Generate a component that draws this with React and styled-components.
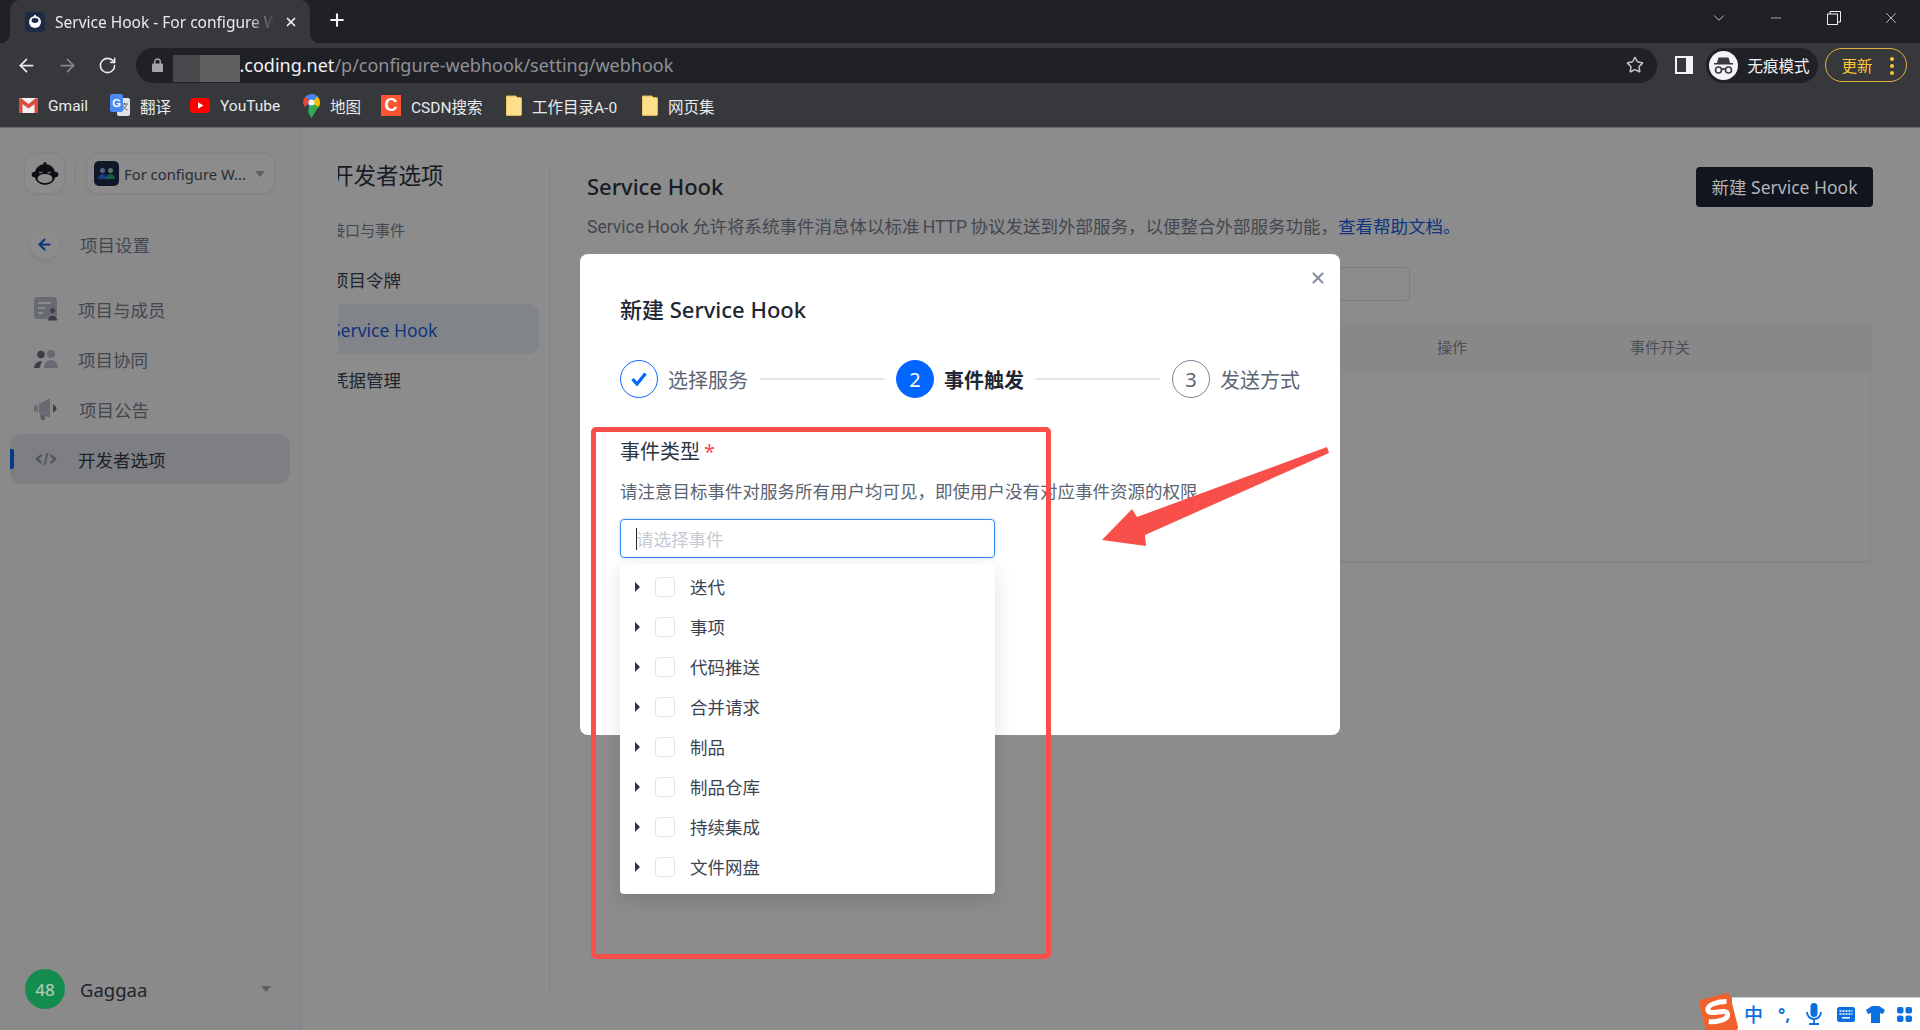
import styled, { createGlobalStyle } from "styled-components"
import { ArrowLeft, ArrowRight, RotateCw, Star, Plus, X, Minus, ChevronDown } from "lucide-react"

const GlobalStyle = createGlobalStyle`
    html, body {
        margin: 0;
        height: 100%;
        overflow: hidden;
        background: #fff;
        font-family: "Noto Sans", "Noto Sans CJK SC", sans-serif;
    }
    * { box-sizing: border-box; }
`

const CJK = `"Noto Sans", "Noto Sans CJK SC", sans-serif`

/* ---------- browser chrome ---------- */
const Browser = styled.div`
    width: 1920px;
    height: 1030px;
    display: flex;
    flex-direction: column;
    overflow: hidden;
    position: relative;
`
const TabStrip = styled.div`
    height: 43px;
    background: #202127;
    display: flex;
    align-items: flex-end;
    padding-left: 10px;
    color: #fff;
`
const Tab = styled.div`
    width: 300px;
    height: 43px;
    background: #37383c;
    border-radius: 10px 10px 0 0;
    display: flex;
    align-items: center;
    padding-left: 15px;
    gap: 10px;
    position: relative;
    &::before, &::after {
        content: "";
        position: absolute;
        bottom: 0;
        width: 10px;
        height: 10px;
    }
    &::before { left: -10px; background: radial-gradient(circle at 0 0, transparent 10px, #37383c 10.5px); }
    &::after { right: -10px; background: radial-gradient(circle at 100% 0, transparent 10px, #37383c 10.5px); }
`
const TabTitle = styled.span`
    width: 219px;
    overflow: hidden;
    white-space: nowrap;
    font-size: 15.5px;
    color: #e8eaed;
    mask-image: linear-gradient(to right, #000 88%, transparent 100%);
`
const TabClose = styled.span`
    display: flex;
    color: #f1f1f1;
`
const NewTab = styled.span`
    display: flex;
    margin: 0 0 3px 17px;
    height: 40px;
    align-items: center;
    color: #f4f4f4;
`
const WindowControls = styled.div`
    margin-left: auto;
    display: flex;
    height: 36px;
    align-self: flex-start;
`
const WindowButton = styled.span`
    width: 57.5px;
    display: flex;
    align-items: center;
    justify-content: center;
    color: #eceff2;
`
const Toolbar = styled.div`
    height: 43px;
    background: #37383c;
    display: flex;
    align-items: center;
    padding: 5px 11px 4px 6.5px;
`
const NavButton = styled.span`
    width: 40.5px;
    display: flex;
    justify-content: center;
    color: ${p => (p.$dim ? "#85868a" : "#e8eaed")};
`
const AddressBar = styled.div`
    width: 1521px;
    margin-left: 7.5px;
    height: 35px;
    background: #202127;
    border-radius: 18px;
    display: flex;
    align-items: center;
    padding-left: 16px;
    position: relative;
    font-size: 18px;
    white-space: nowrap;
`
const Masked = styled.span`
    width: 67px;
    height: 27px;
    margin: 7px 0 0 10px;
    background: linear-gradient(to right, #48494d 0 40%, #605e5f 40% 100%);
`
const Host = styled.span`color: #f1f3f4;`
const UrlPath = styled.span`color: #8f9194;`
const StarIcon = styled.span`
    position: absolute;
    right: 13px;
    display: flex;
    color: #c4c6c9;
`
const SidePanelIcon = styled.svg`
    margin-left: 18px;
    flex: none;
`
const IncognitoPill = styled.div`
    margin-left: 13px;
    width: 112px;
    height: 35px;
    background: #202127;
    border-radius: 18px;
    display: flex;
    align-items: center;
    padding-left: 3px;
    gap: 10px;
    color: #f1f3f4;
    font-size: 15.5px;
`
const UpdatePill = styled.div`
    margin-left: 7px;
    width: 82px;
    height: 34px;
    border: 1px solid #e2b03e;
    border-radius: 18px;
    display: flex;
    align-items: center;
    padding-left: 16px;
    color: #fcc934;
    font-size: 15.5px;
    position: relative;
`
const Dots = styled.span`
    position: absolute;
    right: 12px;
    top: 8px;
    display: grid;
    gap: 3px;
    i {
        display: block;
        width: 4px;
        height: 4px;
        border-radius: 50%;
        background: #fcc934;
    }
`
const BookmarkBar = styled.div`
    height: 42px;
    padding: 0 0 2px 19px;
    background: #37383c;
    border-bottom: 1px solid #6b6c6e;
    display: flex;
    align-items: center;
`
const Bookmark = styled.div`
    width: ${p => p.$w}px;
    display: flex;
    align-items: center;
    gap: 10px;
    color: #e8eaed;
    font: 15.5px Roboto, "Noto Sans CJK SC", sans-serif;
    white-space: nowrap;
`
const CsdnIcon = styled.span`
    width: 20px;
    height: 21px;
    background: #fc5531;
    color: #fff;
    font: 700 18px "Liberation Sans", sans-serif;
    display: flex;
    align-items: center;
    justify-content: center;
`

/* ---------- page ---------- */
const Page = styled.div`
    flex: 1;
    display: flex;
    position: relative;
    background: #fff;
    min-height: 0;
`
const Sidebar = styled.aside`
    width: 301px;
    flex: none;
    background: #fbfbfc;
    border-right: 1px solid #f1f2f4;
    padding: 25px 10px 21px;
    display: flex;
    flex-direction: column;
`
const SideHeader = styled.div`
    display: flex;
    align-items: center;
    height: 41px;
    padding-left: 14px;
`
const LogoBox = styled.div`
    width: 41px;
    height: 41px;
    border-radius: 12px;
    border: 1px solid #eceef1;
    background: #fff;
    box-shadow: 0 1px 3px rgba(0, 0, 0, .05);
    display: flex;
    align-items: center;
    justify-content: center;
`
const HeaderRule = styled.span`
    width: 1px;
    height: 25px;
    margin: 0 10px;
    background: #e3e5e9;
`
const ProjectSwitch = styled.div`
    width: 189px;
    height: 41px;
    border-radius: 12px;
    border: 1px solid #eceef1;
    background: #fff;
    box-shadow: 0 1px 3px rgba(0, 0, 0, .05);
    display: flex;
    align-items: center;
    padding-left: 7px;
    gap: 5px;
    font-size: 14.8px;
    color: #4b5365;
    white-space: nowrap;
`
const Caret = styled.i`
    width: 0;
    height: 0;
    border-left: 5px solid transparent;
    border-right: 5px solid transparent;
    border-top: 6px solid #a9aeb8;
    margin-left: ${p => p.$gap || 0}px;
`
const BackRow = styled.div`
    display: flex;
    align-items: center;
    height: 30px;
    margin-top: 35px;
    padding-left: 20px;
    gap: 21px;
    font-size: 17.5px;
    color: #7b8292;
`
const BackCircle = styled.span`
    width: 29px;
    height: 29px;
    border-radius: 50%;
    background: #fff;
    box-shadow: 0 2px 5px rgba(0, 0, 0, .08);
    display: flex;
    align-items: center;
    justify-content: center;
    color: #1e5fe0;
`
const NavList = styled.nav`
    margin-top: 25px;
    display: flex;
    flex-direction: column;
`
const NavRow = styled.div`
    height: 50px;
    display: flex;
    align-items: center;
    padding-left: 24px;
    gap: 20px;
    font-size: 17.5px;
    border-radius: 12px;
    position: relative;
    color: ${p => (p.$active ? "#363d4d" : "#7b8292")};
    background: ${p => (p.$active ? "#e4e8ee" : "transparent")};
    &::before {
        content: "";
        display: ${p => (p.$active ? "block" : "none")};
        position: absolute;
        left: 0;
        top: 15px;
        width: 4px;
        height: 20px;
        background: #0f66ff;
        border-radius: 0 2px 2px 0;
    }
`
const UserRow = styled.div`
    margin-top: auto;
    display: flex;
    align-items: center;
    padding-left: 15px;
    gap: 15px;
    font-size: 18.5px;
    color: #3c4454;
`
/* sits above the dimming layer: the picture shows it brighter than the layer would leave it */
const Avatar = styled.span`
    width: 40px;
    height: 40px;
    border-radius: 50%;
    background: #148c50;
    color: #aec9b8;
    font-size: 17px;
    font-weight: 500;
    display: flex;
    align-items: center;
    justify-content: center;
    position: relative;
    z-index: 1;
`
const SubNav = styled.div`
    width: 248px;
    flex: none;
    padding: 30px 0 0 37px;
`
const SubClip = styled.div`
    width: 201px;
    overflow: hidden;
`
const SubTitle = styled.div`
    font-size: 22.5px;
    line-height: 36px;
    margin-left: -7px;
    color: #2d3444;
    white-space: nowrap;
`
const SubLabel = styled.div`
    font-size: 15px;
    line-height: 30px;
    margin: 21px 0 9px -8px;
    color: #7b8292;
    white-space: nowrap;
`
const SubRow = styled.div`
    height: 50px;
    line-height: 52px;
    font-size: 17.5px;
    border-radius: 0 10px 10px 0;
    color: ${p => (p.$active ? "#1a5fe8" : "#3c4454")};
    background: ${p => (p.$active ? "#ecf1f8" : "transparent")};
    text-indent: -7px;
    white-space: nowrap;
`
const SubRule = styled.span`
    width: 1px;
    flex: none;
    margin: 39px 0 35px;
    background: #eceef1;
`
const Main = styled.main`
    flex: 1;
    padding: 39px 47px 0 37px;
    min-width: 0;
`
const MainHead = styled.div`
    display: flex;
    align-items: center;
    justify-content: space-between;
`
const MainTitle = styled.h1`
    margin: 0 0 2px;
    font-size: 22px;
    font-weight: 500;
    color: #2d3444;
`
/* sits above the dimming layer too, for the same reason as Avatar */
const PrimaryButton = styled.div`
    width: 177px;
    height: 40px;
    padding-bottom: 2px;
    border-radius: 4px;
    background: #11151f;
    color: #b4b4b4;
    font-size: 17.5px;
    display: flex;
    align-items: center;
    justify-content: center;
    position: relative;
    z-index: 1;
`
const Description = styled.p`
    margin: 7px 0 0;
    font-family: Roboto, "Noto Sans CJK SC", sans-serif;
    font-size: 17.5px;
    line-height: 26px;
    word-spacing: -1px;
    color: #7b8292;
    a { color: #1a5fe8; }
`
const SearchBox = styled.div`
    width: 823px;
    height: 34px;
    margin-top: 27px;
    border: 1px solid #dfe2e7;
    border-radius: 5px;
`
const Table = styled.div`
    margin: 22px 3px 0 0;
    height: 238px;
    border-radius: 5px;
    background: #fff;
    box-shadow: 0 1px 3px rgba(20, 40, 80, .12);
`
const TableHead = styled.div`
    height: 50px;
    padding-bottom: 2px;
    display: grid;
    grid-template-columns: 834px 193px 1fr;
    align-items: center;
    background: #f7f8f9;
    font-size: 15px;
    color: #8a909c;
`
const HeadCell = styled.div`
    height: 26px;
    line-height: 26px;
    padding-left: 15px;
    border-left: ${p => (p.$first ? "none" : "1px solid #eceef1")};
`

/* ---------- modal ---------- */
const Overlay = styled.div`
    position: absolute;
    inset: 0;
    background: rgba(0, 0, 0, .45);
    display: flex;
    justify-content: center;
    align-items: flex-start;
    padding-top: 126px;
    font-family: ${CJK};
`
const Modal = styled.section`
    width: 760px;
    height: 481px;
    background: #fff;
    border-radius: 8px;
    padding: 37px 40px 0;
    position: relative;
    z-index: 2;
`
const CloseButton = styled.span`
    position: absolute;
    right: 13px;
    top: 15px;
    display: flex;
    color: #8a93a3;
`
const ModalTitle = styled.h2`
    margin: 0;
    font-size: 22px;
    line-height: 36px;
    font-weight: 500;
    color: #1f2633;
`
const Stepper = styled.div`
    margin-top: 33px;
    display: flex;
    align-items: center;
`
const Step = styled.div`
    display: flex;
    align-items: center;
    gap: 10px;
    font-size: 20px;
    font-weight: ${p => (p.$current ? 700 : 400)};
    color: ${p => (p.$current ? "#1f2633" : "#5b6472")};
`
const StepCircle = styled.span`
    width: 38px;
    height: 38px;
    border-radius: 50%;
    display: flex;
    align-items: center;
    justify-content: center;
    font-size: 20px;
    font-weight: 400;
    border: 1px solid ${p => (p.$state === "todo" ? "#7c8595" : "#0f66ff")};
    background: ${p => (p.$state === "current" ? "#0066ff" : "#fff")};
    color: ${p => (p.$state === "current" ? "#fff" : p.$state === "done" ? "#0066ff" : "#5b6472")};
`
const StepLine = styled.span`
    flex: 1;
    height: 2px;
    margin: 0 12px;
    background: #e2e6ec;
`
const FieldLabel = styled.div`
    margin-top: 39px;
    font-size: 20px;
    line-height: 30px;
    color: #2d3444;
    b { color: #f5484a; font-weight: 400; margin-left: 4px; }
`
const Hint = styled.div`
    margin-top: 11px;
    font-size: 17.5px;
    line-height: 26px;
    color: #5b6472;
    white-space: nowrap;
`
const SelectWrap = styled.div`
    margin-top: 15px;
    width: 375px;
    position: relative;
`
const SelectInput = styled.div`
    height: 39px;
    border: 1px solid #3b8cf5;
    border-radius: 4px;
    box-shadow: 0 0 3px rgba(0, 102, 255, .35);
    display: flex;
    align-items: center;
    padding-left: 15px;
    font-size: 17.5px;
    color: #c5cad3;
    &::before {
        content: "";
        width: 1px;
        height: 22px;
        margin-right: -1px;
        background: #222;
    }
`
const Dropdown = styled.div`
    position: absolute;
    left: 0;
    top: 45px;
    width: 375px;
    height: 330px;
    padding: 3px 0;
    background: #fff;
    border-radius: 4px;
    box-shadow: 0 6px 20px rgba(0, 0, 0, .12);
`
const OptionRow = styled.div`
    height: 40px;
    display: flex;
    align-items: center;
    padding-left: 15px;
    font-size: 17.5px;
    color: #3c4454;
`
const OptionCaret = styled.i`
    width: 0;
    height: 0;
    border-top: 5px solid transparent;
    border-bottom: 5px solid transparent;
    border-left: 5px solid #2d3444;
`
const Check = styled.span`
    width: 20px;
    height: 20px;
    margin: 0 15px 0 15px;
    border: 1px solid #dfe3e9;
    border-radius: 4px;
`
const OptionName = styled.span`
    margin-bottom: 2px;
`
const RedBox = styled.div`
    position: absolute;
    left: 591px;
    top: 299px;
    width: 460px;
    height: 532px;
    border: 5px solid #f84f4a;
    border-radius: 5px;
    z-index: 3;
`
const RedArrow = styled.svg`
    position: absolute;
    left: 1095px;
    top: 312px;
    z-index: 3;
`

/* ---------- input method bar ---------- */
const ImeBar = styled.div`
    position: absolute;
    right: 0;
    bottom: 0;
    width: 188px;
    height: 33px;
    background: #fff;
    border-top: 1px solid #c6d2df;
    display: flex;
    align-items: center;
    padding-left: 12px;
    color: #0a6fe0;
    z-index: 3;
`
const ImeZh = styled.span`
    font-size: 19px;
    font-weight: 500;
    width: 34px;
`
const ImePunct = styled.span`
    font-size: 17px;
    font-weight: 700;
    width: 28px;
`
const ImeIcon = styled.svg`
    margin-right: ${p => p.$gap}px;
    flex: none;
`
const ImeLogo = styled.svg`
    position: absolute;
    right: 181px;
    bottom: 0;
    z-index: 4;
`

/* ---------- drawings ---------- */
const Monkey = ({ size = 28, dark = "#161a24", face = "#fff" }) => (
    <svg width={size} height={size} viewBox="0 0 28 28">
        <circle cx="14" cy="3.500" r="1.600" fill={dark} />
        <circle cx="3.500" cy="14.500" r="2.800" fill={dark} />
        <circle cx="24.500" cy="14.500" r="2.800" fill={dark} />
        <circle cx="14" cy="14.500" r="10.500" fill={dark} />
        <ellipse cx="14" cy="18.500" rx="7.500" ry="4.500" fill={face} />
        <path d="M8 12.500h3.500M16.500 12.500H20" stroke={face} strokeWidth="1.400" opacity=".7" />
    </svg>
)
const Favicon = () => (
    <svg width="20" height="20" viewBox="0 0 20 20">
        <rect width="20" height="20" rx="4" fill="#1c2a44" />
        <circle cx="10" cy="10" r="6" fill="#fff" />
        <ellipse cx="10" cy="8.500" rx="3.400" ry="2.400" fill="#1c2a44" />
        <circle cx="10" cy="3.800" r="1" fill="#fff" />
    </svg>
)
const GmailIcon = () => (
    <svg width="19" height="15" viewBox="0 0 19 15">
        <rect width="19" height="15" rx="1.500" fill="#f1f1f1" />
        <path d="M0 1.500V15h3.500V6L9.500 10.500 15.500 6V15H19V1.500L17 0 9.500 6 2 0z" fill="#dd4b3e" />
    </svg>
)
const TranslateIcon = () => (
    <svg width="20" height="24" viewBox="0 0 20 24">
        <rect x="7" y="4" width="13" height="18" rx="2" fill="#dfe3e8" />
        <path d="M11 10h7M14.500 9v1.500M16.500 10.500c-.6 2.500-2.500 4.500-4.500 5.500M13 11.500c.8 2 2.500 3.800 4.500 4.500" stroke="#5f6368" fill="none" />
        <rect width="13" height="18" rx="2" fill="#4a8af4" />
        <text x="6.500" y="13" textAnchor="middle" fontSize="11" fontWeight="700" fill="#fff" fontFamily="Liberation Sans">G</text>
    </svg>
)
const YoutubeIcon = () => (
    <svg width="20" height="15" viewBox="0 0 20 15">
        <rect width="20" height="15" rx="4" fill="#f00" />
        <path d="M8 4.200v6.600l5.500-3.300z" fill="#fff" />
    </svg>
)
const MapsIcon = () => (
    <svg width="17" height="24" viewBox="0 0 17 24">
        <path d="M8.500 0a8.500 8.500 0 0 1 8.500 8.500c0 3-1.500 5-3.500 7.500L8.500 24 5 18z" fill="#34a853" />
        <path d="M2.500 2.500A8.500 8.500 0 0 1 8.500 0a8.500 8.500 0 0 1 6 2.500l-9 10z" fill="#4285f4" />
        <path d="M14.500 2.500A8.500 8.500 0 0 1 17 8.500c0 1.500-.5 3-1.300 4.300L8.500 9z" fill="#fbbc04" />
        <path d="M0 8.500a8.500 8.500 0 0 1 2.500-6L7 7l-5 6a8.500 8.500 0 0 1-2-4.500z" fill="#ea4335" />
        <circle cx="8.500" cy="8.500" r="3" fill="#f5f5f5" />
    </svg>
)
const FolderIcon = () => (
    <svg width="16" height="21" viewBox="0 0 16 21">
        <path d="M1 1h9l1 1.500h3.500a1 1 0 0 1 1 1V19.500a1 1 0 0 1-1 1H1a1 1 0 0 1-1-1V2a1 1 0 0 1 1-1z" fill="#fcdf8b" stroke="#e2b54c" />
    </svg>
)
const IncognitoIcon = () => (
    <svg width="29" height="29" viewBox="0 0 29 29">
        <circle cx="14.500" cy="14.500" r="14.500" fill="#f1f3f4" />
        <path d="M9.500 6.500h10l1.600 5.500h2.900v1.400H5v-1.400h2.900z" fill="#3a3b3f" />
        <circle cx="9.500" cy="19" r="3" fill="none" stroke="#3a3b3f" strokeWidth="1.600" />
        <circle cx="19.500" cy="19" r="3" fill="none" stroke="#3a3b3f" strokeWidth="1.600" />
        <path d="M12.500 18.500c1.300-.8 2.700-.8 4 0" fill="none" stroke="#3a3b3f" strokeWidth="1.500" />
    </svg>
)
const RestoreIcon = () => (
    <svg width="14" height="14" viewBox="0 0 14 14" fill="none" stroke="currentColor">
        <rect x=".5" y="3" width="10" height="10.500" />
        <path d="M3 3V.5h10.500V11H10.500" />
    </svg>
)
const LockIcon = () => (
    <svg width="11" height="14" viewBox="0 0 11 14">
        <path d="M2.700 6V3.800a2.800 2.800 0 0 1 5.600 0V6" fill="none" stroke="#a4a5a8" strokeWidth="1.400" />
        <rect y="5.500" width="11" height="8.500" rx="1" fill="#a4a5a8" />
    </svg>
)
const ProjectIcon = () => (
    <svg width="25" height="25" viewBox="0 0 25 25">
        <rect width="25" height="25" rx="5" fill="#1d2a4c" />
        <circle cx="8.500" cy="9.500" r="2.500" fill="#9db4e8" />
        <circle cx="16.500" cy="9.500" r="2.500" fill="#9fd8c0" />
        <path d="M4 18c0-3 2-5 4.500-5S13 15 13 18z" fill="#2e6df0" />
        <path d="M12 18c0-3 2-5 4.500-5s4.500 2 4.500 5z" fill="#1fb57d" />
    </svg>
)
const MembersIcon = () => (
    <svg width="24" height="24" viewBox="0 0 24 24">
        <rect y="0" width="23" height="22" rx="4" fill="#bcc1cc" />
        <path d="M4 6h13M4 11h7M4 16h5" stroke="#fbfbfc" strokeWidth="2" />
        <circle cx="18.500" cy="13.500" r="3" fill="#6f7480" stroke="#bcc1cc" />
        <path d="M13.500 24c0-4 2-6 5-6s5 2 5 6z" fill="#6f7480" stroke="#fbfbfc" />
    </svg>
)
const TeamIcon = () => (
    <svg width="24" height="20" viewBox="0 0 24 20">
        <circle cx="17" cy="5" r="4" fill="#bcc1cc" />
        <path d="M10 19c0-5 3-8 7-8s7 3 7 8z" fill="#bcc1cc" />
        <circle cx="7" cy="5.500" r="3.800" fill="#6f7480" />
        <path d="M0 19c.3-4 3-7 8-7l-2.500 7z" fill="#6f7480" />
    </svg>
)
const MegaphoneIcon = () => (
    <svg width="25" height="22" viewBox="0 0 25 22">
        <path d="M0 7.500h4v6H0z" fill="#bcc1cc" />
        <path d="M5 6l11-6v20L5 15z" fill="#bcc1cc" />
        <path d="M19 6.500c2 1 3.500 2.500 3.500 4s-1.500 3-3.500 4z" fill="#6f7480" />
        <path d="M6 16l5 1.500V22H7z" fill="#a2a7b2" />
    </svg>
)
const CodeIcon = () => (
    <svg width="24" height="14" viewBox="0 0 24 14" fill="none" stroke="#8d929d" strokeWidth="2.200">
        <path d="M7.500 3L3 7l4.500 4M16.500 3L21 7l-4.500 4" />
        <path d="M13.500 1l-3 12" stroke="#a2a7b2" />
    </svg>
)

const navItems = [
    { label: "项目与成员", Icon: MembersIcon },
    { label: "项目协同", Icon: TeamIcon },
    { label: "项目公告", Icon: MegaphoneIcon },
    { label: "开发者选项", Icon: CodeIcon, active: true },
]
const eventTypes = ["迭代", "事项", "代码推送", "合并请求", "制品", "制品仓库", "持续集成", "文件网盘"]
const bookmarks = [
    { label: "Gmail", w: 91, icon: <GmailIcon /> },
    { label: "翻译", w: 80, icon: <TranslateIcon /> },
    { label: "YouTube", w: 113, icon: <YoutubeIcon /> },
    { label: "地图", w: 78, icon: <MapsIcon /> },
    { label: "CSDN搜索", w: 125, icon: <CsdnIcon>C</CsdnIcon> },
    { label: "工作目录A-0", w: 136, icon: <FolderIcon /> },
    { label: "网页集", w: 80, icon: <FolderIcon /> },
]

export default function App() {
    return (
        <Browser>
            <GlobalStyle />
            <TabStrip>
                <Tab>
                    <Favicon />
                    <TabTitle>Service Hook - For configure Webhook</TabTitle>
                    <TabClose><X size={14} strokeWidth={3} /></TabClose>
                </Tab>
                <NewTab><Plus size={20} strokeWidth={2.5} /></NewTab>
                <WindowControls>
                    <WindowButton><ChevronDown size={18} strokeWidth={1} /></WindowButton>
                    <WindowButton><Minus size={16} strokeWidth={1} /></WindowButton>
                    <WindowButton><RestoreIcon /></WindowButton>
                    <WindowButton><X size={18} strokeWidth={1} /></WindowButton>
                </WindowControls>
            </TabStrip>
            <Toolbar>
                <NavButton><ArrowLeft size={21} /></NavButton>
                <NavButton $dim><ArrowRight size={21} /></NavButton>
                <NavButton><RotateCw size={19} /></NavButton>
                <AddressBar>
                    <LockIcon />
                    <Masked />
                    <Host>.coding.net</Host>
                    <UrlPath>/p/configure-webhook/setting/webhook</UrlPath>
                    <StarIcon><Star size={18} /></StarIcon>
                </AddressBar>
                <SidePanelIcon width="18" height="18" viewBox="0 0 18 18">
                    <rect width="18" height="18" fill="#f1f3f4" />
                    <rect x="2" y="2" width="9" height="14" fill="#37383c" />
                </SidePanelIcon>
                <IncognitoPill>
                    <IncognitoIcon />
                    无痕模式
                </IncognitoPill>
                <UpdatePill>
                    更新
                    <Dots><i /><i /><i /></Dots>
                </UpdatePill>
            </Toolbar>
            <BookmarkBar>
                {bookmarks.map(b => (
                    <Bookmark key={b.label} $w={b.w}>{b.icon}{b.label}</Bookmark>
                ))}
            </BookmarkBar>
            <Page>
                <Sidebar>
                    <SideHeader>
                        <LogoBox><Monkey /></LogoBox>
                        <HeaderRule />
                        <ProjectSwitch>
                            <ProjectIcon />
                            For configure W...
                            <Caret $gap={4} />
                        </ProjectSwitch>
                    </SideHeader>
                    <BackRow>
                        <BackCircle><ArrowLeft size={17} strokeWidth={3} /></BackCircle>
                        项目设置
                    </BackRow>
                    <NavList>
                        {navItems.map(({ label, Icon, active }) => (
                            <NavRow key={label} $active={active}>
                                <Icon />
                                {label}
                            </NavRow>
                        ))}
                    </NavList>
                    <UserRow>
                        <Avatar>48</Avatar>
                        Gaggaa
                        <Caret $gap={99} />
                    </UserRow>
                </Sidebar>
                <SubNav>
                    <SubClip>
                        <SubTitle>开发者选项</SubTitle>
                        <SubLabel>接口与事件</SubLabel>
                        <SubRow>项目令牌</SubRow>
                        <SubRow $active>Service Hook</SubRow>
                        <SubRow>凭据管理</SubRow>
                    </SubClip>
                </SubNav>
                <SubRule />
                <Main>
                    <MainHead>
                        <MainTitle>Service Hook</MainTitle>
                        <PrimaryButton>新建 Service Hook</PrimaryButton>
                    </MainHead>
                    <Description>
                        Service Hook 允许将系统事件消息体以标准 HTTP 协议发送到外部服务，以便整合外部服务功能，<a>查看帮助文档。</a>
                    </Description>
                    <SearchBox />
                    <Table>
                        <TableHead>
                            <HeadCell $first />
                            <HeadCell>操作</HeadCell>
                            <HeadCell>事件开关</HeadCell>
                        </TableHead>
                    </Table>
                </Main>
                <Overlay>
                    <Modal>
                        <CloseButton><X size={18} strokeWidth={3} /></CloseButton>
                        <ModalTitle>新建 Service Hook</ModalTitle>
                        <Stepper>
                            <Step>
                                <StepCircle $state="done">
                                    <svg width="18" height="16" viewBox="0 0 18 16" fill="none" stroke="currentColor" strokeWidth="3.200">
                                        <path d="M2.500 8l4.500 5L15.500 2.500" />
                                    </svg>
                                </StepCircle>
                                选择服务
                            </Step>
                            <StepLine />
                            <Step $current>
                                <StepCircle $state="current">2</StepCircle>
                                事件触发
                            </Step>
                            <StepLine />
                            <Step>
                                <StepCircle $state="todo">3</StepCircle>
                                发送方式
                            </Step>
                        </Stepper>
                        <FieldLabel>事件类型<b>*</b></FieldLabel>
                        <Hint>请注意目标事件对服务所有用户均可见，即使用户没有对应事件资源的权限</Hint>
                        <SelectWrap>
                            <SelectInput>请选择事件</SelectInput>
                            <Dropdown>
                                {eventTypes.map(name => (
                                    <OptionRow key={name}>
                                        <OptionCaret />
                                        <Check />
                                        <OptionName>{name}</OptionName>
                                    </OptionRow>
                                ))}
                            </Dropdown>
                        </SelectWrap>
                    </Modal>
                    <RedBox />
                    <RedArrow width="240" height="110" viewBox="1095 440 240 110">
                        <path d="M1327 447L1137 517 1132 509 1102 540 1146 546 1145 535 1329 453z" fill="#f84f4a" />
                    </RedArrow>
                </Overlay>
                <ImeBar>
                    <ImeZh>中</ImeZh>
                    <ImePunct>°,</ImePunct>
                    <ImeIcon $gap={15} width="16" height="22" viewBox="0 0 16 22">
                        <rect x="4.500" width="7" height="14" rx="3.500" fill="currentColor" />
                        <path d="M1 9c0 4 3 7 7 7s7-3 7-7M8 16v4M3 21h10" fill="none" stroke="currentColor" strokeWidth="1.800" />
                    </ImeIcon>
                    <ImeIcon $gap={11} width="18" height="15" viewBox="0 0 18 15">
                        <rect width="18" height="15" rx="2.500" fill="currentColor" />
                        <path d="M2.500 4h13M2.500 7h13" stroke="#fff" strokeWidth="1.500" strokeDasharray="2 1" />
                        <path d="M5 10.800h8" stroke="#fff" strokeWidth="1.500" />
                    </ImeIcon>
                    <ImeIcon $gap={12} width="19" height="17" viewBox="0 0 19 17">
                        <path d="M6 0h7l6 4-2 4-3-1v10H5V7L2 8 0 4z" fill="currentColor" />
                    </ImeIcon>
                    <ImeIcon $gap={0} width="15" height="15" viewBox="0 0 15 15">
                        <rect width="6.500" height="6.500" rx="2" fill="currentColor" />
                        <rect x="8.500" width="6.500" height="6.500" rx="2" fill="currentColor" />
                        <rect y="8.500" width="6.500" height="6.500" rx="2" fill="currentColor" />
                        <rect x="8.500" y="8.500" width="6.500" height="6.500" rx="2" fill="currentColor" />
                    </ImeIcon>
                </ImeBar>
                <ImeLogo width="42" height="38" viewBox="0 0 42 38">
                    <g transform="rotate(-14 21 21)">
                        <rect x="5" y="4" width="32" height="38" rx="3" fill="#f2602c" />
                        <path d="M32 12c-8-2-20-2-20 4 0 6 18 2 18 8s-12 6-20 3" fill="none" stroke="#fff" strokeWidth="5" />
                    </g>
                </ImeLogo>
            </Page>
        </Browser>
    )
}
